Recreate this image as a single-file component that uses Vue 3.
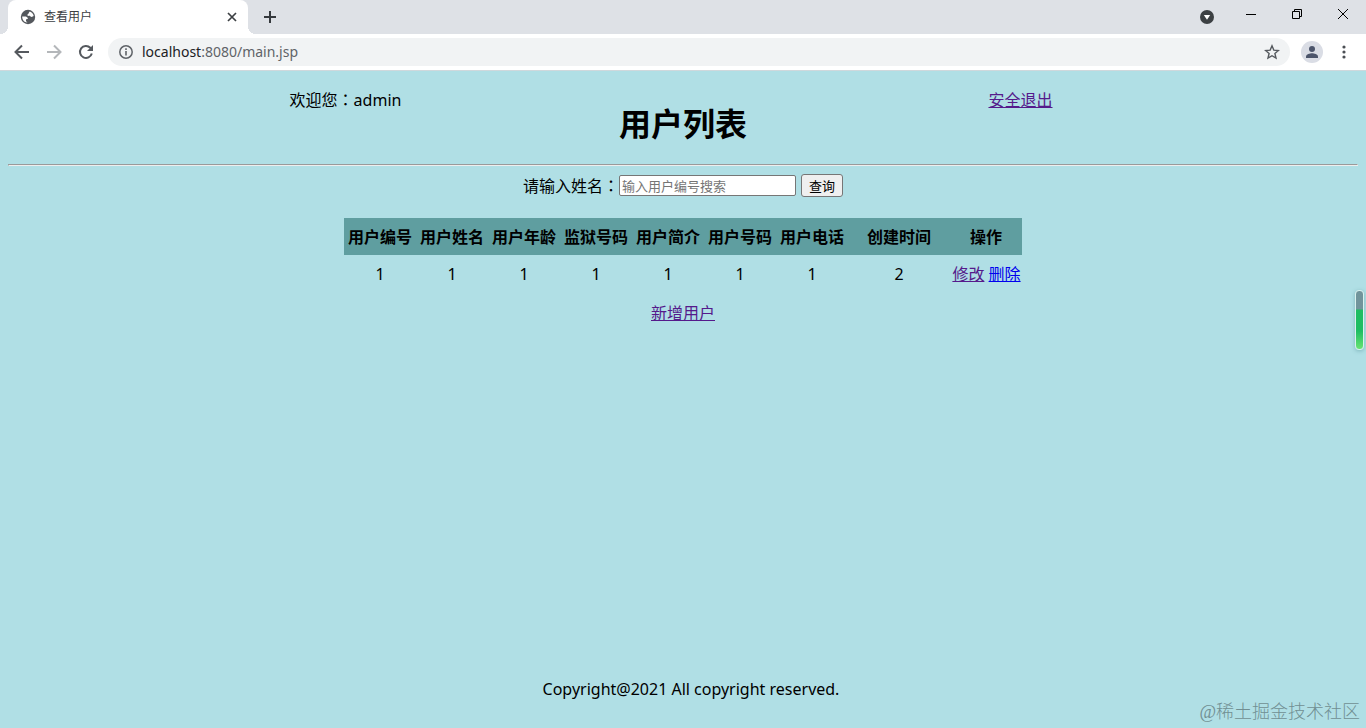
<script setup>
import { ref } from 'vue'

const keyword = ref('')
const address = ref('localhost:8080/main.jsp')
const headers = ['用户编号', '用户姓名', '用户年龄', '监狱号码', '用户简介', '用户号码', '用户电话', '创建时间', '操作']
const rows = [['1', '1', '1', '1', '1', '1', '1', '2']]
</script>

<template>
  <div class="window">
    <header class="chrome">
      <div class="tabstrip">
        <div class="tab">
          <svg class="globe" viewBox="0 0 16 16" width="16" height="16" aria-hidden="true">
            <circle cx="8" cy="8" r="7.200" fill="#54585d" />
            <path d="M2.200 7.600h2.600c1.500 0 2.700.7 3 1.700.1.500-.2.900-.9.900H6v1.600c0 .7.500 1 1.200 1.100v.7C4.300 13.400 2.100 11 2.200 7.600zM9.800 2.500c2 .7 3.600 2.500 3.900 4.600-.7.300-1.300.8-2.100.8-.9 0-1.200-1-2.100-1.200-.8-.2-2 .1-2.100-.7-.1-.9.900-.9 1.200-1.500.3-.7.400-1.600 1.200-2z" fill="#fff" />
          </svg>
          <span class="tab-title">查看用户</span>
          <button class="icon-btn tab-close" type="button" aria-label="关闭标签页">
            <svg viewBox="0 0 16 16" width="16" height="16"><path d="M4 4l8 8M12 4l-8 8" stroke="#3c4043" stroke-width="1.700" /></svg>
          </button>
        </div>
        <button class="icon-btn new-tab" type="button" aria-label="新标签页">
          <svg viewBox="0 0 16 16" width="16" height="16"><path d="M8 2v12M2 8h12" stroke="#35393d" stroke-width="2" /></svg>
        </button>
        <div class="window-controls">
          <button class="icon-btn search-tabs" type="button" aria-label="搜索标签页">
            <svg viewBox="0 0 16 16" width="16" height="16"><circle cx="8" cy="8" r="7" fill="#3c4043" /><path d="M4.800 6h6.400L8 10.800z" fill="#fff" /></svg>
          </button>
          <button class="icon-btn win" type="button" aria-label="最小化">
            <svg viewBox="0 0 12 12" width="12" height="12"><path d="M1 6.500h10" stroke="#000" /></svg>
          </button>
          <button class="icon-btn win" type="button" aria-label="还原">
            <svg viewBox="0 0 12 12" width="12" height="12"><path d="M1.500 3.500h7v7h-7zM3.500 3.500v-2h7v7h-2" fill="none" stroke="#000" /></svg>
          </button>
          <button class="icon-btn win" type="button" aria-label="关闭">
            <svg viewBox="0 0 12 12" width="12" height="12"><path d="M1 1l10 10M11 1L1 11" stroke="#000" /></svg>
          </button>
        </div>
      </div>
      <div class="toolbar">
        <button class="icon-btn nav" type="button" aria-label="后退">
          <svg viewBox="0 0 16 16" width="16" height="16"><path d="M15 8H2M8 1.500L1.500 8 8 14.500" fill="none" stroke="#55595e" stroke-width="2" /></svg>
        </button>
        <button class="icon-btn nav" type="button" aria-label="前进" disabled>
          <svg viewBox="0 0 16 16" width="16" height="16"><path d="M1 8h13M8 1.500L14.500 8 8 14.500" fill="none" stroke="#b4b7ba" stroke-width="2" /></svg>
        </button>
        <button class="icon-btn nav reload" type="button" aria-label="重新加载">
          <svg viewBox="0 0 16 16" width="16" height="16"><path d="M13.800 9.500A6 6 0 1 1 12.300 3.700L14 5.400" fill="none" stroke="#55595e" stroke-width="2" /><path d="M15 1v6H9z" fill="#55595e" /></svg>
        </button>
        <div class="omnibox">
          <svg viewBox="0 0 16 16" width="16" height="16" aria-hidden="true"><circle cx="8" cy="8" r="6.200" fill="none" stroke="#5f6368" stroke-width="1.500" /><path d="M8 7v4.500M8 4.200v1.700" stroke="#5f6368" stroke-width="1.600" /></svg>
          <a class="address" :href="'http://' + address"><span class="host">localhost</span>:8080/main.jsp</a>
          <button class="icon-btn star" type="button" aria-label="为此页添加书签">
            <svg viewBox="0 0 16 16" width="16" height="16"><path d="M8 1.800l1.800 4.300 4.600.4-3.500 3 1.100 4.600L8 11.700l-4 2.400 1.100-4.600-3.500-3 4.600-.4z" fill="none" stroke="#55595e" stroke-width="1.400" /></svg>
          </button>
        </div>
        <button class="icon-btn profile" type="button" aria-label="用户">
          <svg viewBox="0 0 22 22" width="22" height="22"><circle cx="11" cy="11" r="11" fill="#dadde5" /><circle cx="11" cy="8" r="3" fill="#4c556b" /><path d="M5 17v-1.500c0-2.100 4-3.200 6-3.200s6 1.100 6 3.200V17z" fill="#4c556b" /></svg>
        </button>
        <button class="icon-btn more" type="button" aria-label="更多">
          <svg viewBox="0 0 16 16" width="16" height="16" fill="#4b4f54"><circle cx="8" cy="3" r="1.600" /><circle cx="8" cy="8" r="1.600" /><circle cx="8" cy="13" r="1.600" /></svg>
        </button>
      </div>
    </header>

    <main class="page">
      <div class="banner">
        <span class="welcome">欢迎您<span class="colon">：</span>admin</span>
        <a class="logout visited" href="#logout">安全退出</a>
        <h1>用户列表</h1>
      </div>
      <hr>
      <form class="search" @submit.prevent>
        <label for="keyword">请输入姓名<span class="colon">：</span></label>
        <input id="keyword" v-model="keyword" type="text" placeholder="输入用户编号搜索">
        <button type="submit">查询</button>
      </form>
      <table>
        <thead>
          <tr>
            <th v-for="h in headers" :key="h">{{ h }}</th>
          </tr>
        </thead>
        <tbody>
          <tr v-for="(row, i) in rows" :key="i">
            <td v-for="(cell, j) in row" :key="j">{{ cell }}</td>
            <td class="actions"><a class="visited" href="#edit">修改</a> <a href="#delete">删除</a></td>
          </tr>
        </tbody>
      </table>
      <a class="add visited" href="#add">新增用户</a>
      <footer>Copyright@2021 All copyright reserved.</footer>
      <div class="meter"></div>
      <div class="watermark">@稀土掘金技术社区</div>
    </main>
  </div>
</template>

<style>
body {
  margin: 0;
}
</style>

<style scoped>
.window {
  display: flex;
  flex-direction: column;
  min-height: 100vh;
  font-family: "Noto Sans", "Noto Sans CJK SC", sans-serif;
  font-size: 16px;
  line-height: 22px;
  color: #000;
}
.icon-btn {
  display: flex;
  align-items: center;
  justify-content: center;
  flex: none;
  padding: 0;
  border: 0;
  background: none;
}
.chrome {
  background: #fff;
  border-bottom: 1px solid #cfd8dc;
}
.tabstrip {
  display: flex;
  align-items: center;
  height: 34px;
  padding-left: 8px;
  background: #dee1e6;
}
.tab {
  position: relative;
  display: flex;
  align-items: center;
  box-sizing: border-box;
  width: 240px;
  height: 34px;
  padding: 0 8px 0 12px;
  border-radius: 8px 8px 0 0;
  background: #fff;
}
.tab::before,
.tab::after {
  content: "";
  position: absolute;
  bottom: 0;
  width: 8px;
  height: 8px;
}
.tab::before {
  right: 100%;
  background: radial-gradient(circle at 0 0, #dee1e6 8px, #fff 8px);
}
.tab::after {
  left: 100%;
  background: radial-gradient(circle at 100% 0, #dee1e6 8px, #fff 8px);
}
.tab-title {
  flex: 1;
  margin-left: 8px;
  font-size: 12px;
  color: #3c4043;
}
.new-tab {
  margin-left: 14px;
}
.window-controls {
  display: flex;
  align-items: flex-start;
  align-self: stretch;
  margin-left: auto;
}
.search-tabs {
  height: 34px;
  margin-right: 13px;
}
.win {
  width: 46px;
  height: 28px;
}
.toolbar {
  display: flex;
  align-items: center;
  height: 36px;
  padding: 0 14px;
}
.nav {
  margin-right: 16px;
}
.reload {
  margin-right: 14px;
}
.omnibox {
  display: flex;
  flex: 1;
  align-items: center;
  box-sizing: border-box;
  height: 28px;
  padding: 0 10px;
  border-radius: 14px;
  background: #f1f3f4;
}
.address {
  flex: 1;
  margin-left: 8px;
  font-size: 14px;
  color: #5f6368;
  text-decoration: none;
}
.host {
  color: #202124;
}
.profile {
  margin-left: 11px;
}
.more {
  margin-left: 13px;
}
.page {
  position: relative;
  display: flex;
  flex: 1;
  flex-direction: column;
  align-items: center;
  padding: 0 8px;
  background: #b0dfe5;
}
.banner {
  display: grid;
  grid-template-columns: 1fr 1fr;
  justify-items: center;
  align-items: start;
  align-self: stretch;
  height: 93px;
  box-sizing: border-box;
  padding-top: 18px;
}
.welcome {
  grid-area: 1 / 1;
}
.logout {
  grid-area: 1 / 2;
}
h1 {
  grid-area: 1 / 1 / 2 / 3;
  margin: 14px 0 0;
  font-size: 32px;
  line-height: 42px;
  pointer-events: none;
}
.colon {
  font-family: "Noto Sans CJK TC", sans-serif;
  line-height: 1;
}
a {
  color: #0000ee;
}
a.visited {
  color: #551a8b;
}
hr {
  align-self: stretch;
  box-sizing: border-box;
  height: 2px;
  margin: 0;
  border: 1px solid;
  border-color: #9a9a9a #eee #eee #9a9a9a;
}
.search {
  display: flex;
  align-items: center;
  margin-top: 8px;
}
.search input {
  box-sizing: border-box;
  width: 177px;
  height: 21px;
  margin-right: 5px;
  padding: 1px 2px;
  border: 1px solid #767676;
  border-radius: 2px;
  background: #fff;
  font: 13px "Noto Sans", "Noto Sans CJK SC", sans-serif;
}
.search input::placeholder {
  color: #757575;
}
.search button {
  box-sizing: border-box;
  width: 42px;
  height: 23px;
  padding: 0;
  border: 1px solid #767676;
  border-radius: 3px;
  background: #efefef;
  font: 13px "Noto Sans", "Noto Sans CJK SC", sans-serif;
  color: #000;
}
table {
  margin-top: 21px;
  border-collapse: collapse;
  text-align: center;
}
thead {
  background: #5f9ea0;
}
th,
td {
  box-sizing: border-box;
  min-width: 72px;
  height: 37px;
  padding: 0;
}
th:nth-child(8) {
  width: 102px;
}
.actions {
  padding: 0 1px 0 2px;
  white-space: nowrap;
}
.add {
  margin-top: 10px;
}
footer {
  margin-top: auto;
  padding: 0 0 28px 16px;
}
.meter {
  position: absolute;
  top: 219px;
  right: 2px;
  width: 7px;
  height: 58px;
  border: 1px solid #d9f1ee;
  border-radius: 4px;
  background: linear-gradient(#71949b 0 18px, #1ebd62 19px 40px, #69e372);
  box-shadow: 0 1px 4px #7eb5bb;
}
.watermark {
  position: absolute;
  right: 6px;
  bottom: 5px;
  font-family: "Liberation Serif", "Noto Sans CJK SC", serif;
  font-size: 18px;
  font-weight: 300;
  color: #718f93;
}
</style>
